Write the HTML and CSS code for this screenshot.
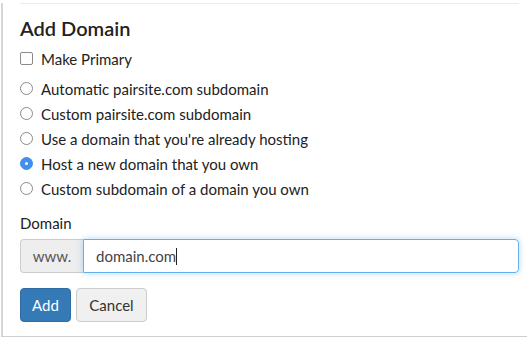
FILE: index.html
```html
<!DOCTYPE html>
<html>
<head>
<meta charset="utf-8">
<link rel="stylesheet" href="styles.css">
</head>
<body>
<div class="panel">
  <div class="topline"></div>
  <h2 class="title">Add Domain</h2>
  <label class="row check"><span class="box"></span>Make Primary</label>
  <div class="radios">
    <label class="row"><span class="radio"></span>Automatic pairsite.com subdomain</label>
    <label class="row"><span class="radio"></span>Custom pairsite.com subdomain</label>
    <label class="row"><span class="radio"></span>Use a domain that you're already hosting</label>
    <label class="row"><span class="radio on"></span>Host a new domain that you own</label>
    <label class="row"><span class="radio"></span>Custom subdomain of a domain you own</label>
  </div>
  <div class="field-label">Domain</div>
  <div class="input-group">
    <span class="addon">www.</span>
    <div class="input">domain.com<span class="caret"></span></div>
  </div>
  <div class="buttons">
    <button class="btn primary">Add</button>
    <button class="btn default">Cancel</button>
  </div>
</div>
</body>
</html>
```
FILE: styles.css
```css
html, body {
  margin: 0;
  padding: 0;
  background: #fff;
}
body {
  font-family: Lato, "Noto Sans", sans-serif;
  color: #333;
  font-size: 15px;
}
.panel {
  box-sizing: border-box;
  width: 526px;
  height: 335px;
  margin-left: 1px;
  border-left: 2px solid #d6d6d6;
  border-bottom: 2px solid #cfcfcf;
  padding: 0 8px 0 17px;
}
.topline {
  height: 1px;
  background: #ececec;
  margin-top: 3px;
}
.title {
  margin: 11px 0 0;
  font-size: 20px;
  font-weight: 600;
  line-height: 26px;
  color: #222;
}
.row {
  display: flex;
  align-items: center;
  height: 25px;
  gap: 8px;
  color: #222;
}
.check {
  margin-top: 5px;
}
.box {
  width: 11px;
  height: 11px;
  border: 1px solid #8a8a8a;
  border-radius: 2px;
}
.radios {
  margin-top: 5px;
}
.radio {
  width: 11px;
  height: 11px;
  border: 1px solid #8a8a8a;
  border-radius: 50%;
  box-sizing: content-box;
}
.radio.on {
  border-color: #3f8ff0;
  background: #3f8ff0;
  position: relative;
}
.radio.on::after {
  content: "";
  position: absolute;
  left: 4px;
  top: 4px;
  width: 3px;
  height: 3px;
  border-radius: 50%;
  background: #fff;
}
.field-label {
  margin-top: 12px;
  line-height: 20px;
  color: #222;
}
.input-group {
  display: flex;
  margin-top: 6px;
  height: 34px;
}
.addon {
  box-sizing: border-box;
  width: 63px;
  display: flex;
  align-items: center;
  justify-content: center;
  background: #eee;
  border: 1px solid #ccc;
  border-right: none;
  border-radius: 4px 0 0 4px;
  color: #555;
}
.input {
  flex: 1;
  box-sizing: border-box;
  display: flex;
  align-items: center;
  padding-left: 12px;
  border: 1px solid #66afe9;
  border-radius: 0 4px 4px 0;
  box-shadow: 0 0 6px rgba(102, 175, 233, 0.5);
  color: #444;
}
.caret {
  display: inline-block;
  width: 1px;
  height: 17px;
  background: #222;
}
.buttons {
  display: flex;
  gap: 5px;
  margin-top: 15px;
}
.btn {
  font-family: inherit;
  font-size: 15px;
  height: 34px;
  border-radius: 4px;
  padding: 0 10px;
  cursor: pointer;
}
.primary {
  width: 51px;
  background: #337ab7;
  border: 1px solid #2e6da4;
  color: #fff;
}
.default {
  width: 71px;
  background: #f0f0f0;
  border: 1px solid #ccc;
  color: #333;
}
```
